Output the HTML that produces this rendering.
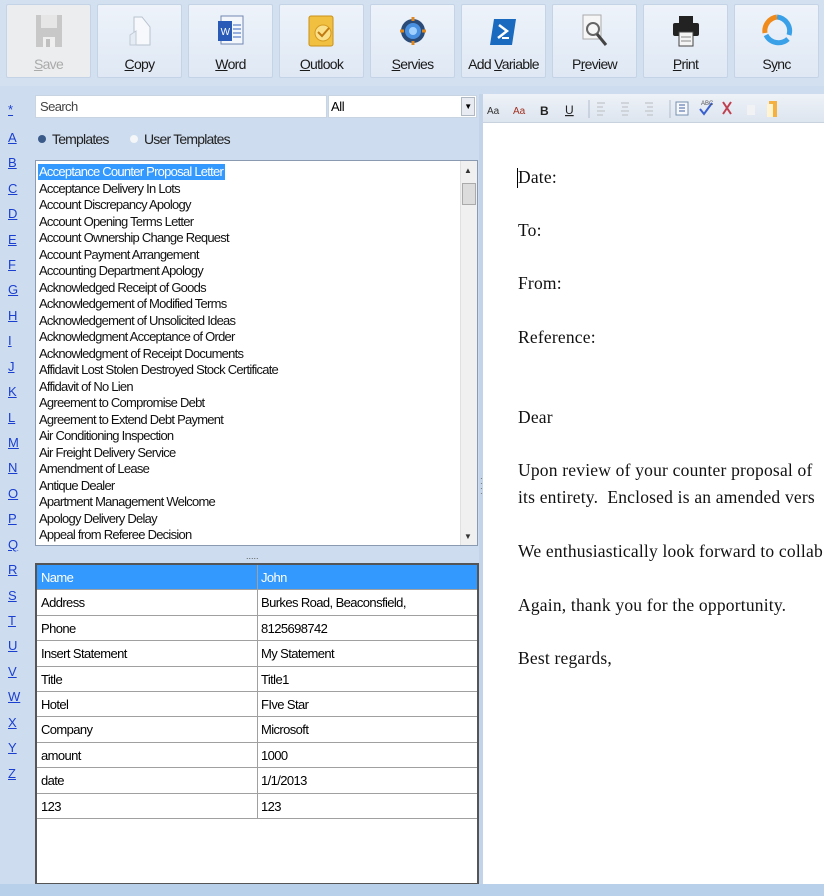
<!DOCTYPE html>
<html><head><meta charset="utf-8">
<style>
*{margin:0;padding:0;box-sizing:border-box}
body{width:824px;height:896px;overflow:hidden;background:#cddcee;font-family:"Liberation Sans",sans-serif;position:relative}
.tb{position:absolute;top:0;left:0;width:824px;height:86px;background:#d3e0f0}
.btn{position:absolute;top:4px;width:85px;height:74px;background:linear-gradient(#eef3fa,#dfe8f4);border:1px solid #c4d3e6;border-radius:2px;text-align:center;font-size:14px;color:#1a1a1a;letter-spacing:-0.7px}
.btn .ic{position:absolute;left:26px;top:8px;width:32px;height:36px}
.btn .lb{position:absolute;left:0;right:0;top:51px}
.letters{position:absolute;left:0;top:100px;width:28px}
.letters span{position:absolute;left:8px;font-size:13px;color:#1a3fd0;text-decoration:underline}
.search{position:absolute;left:35px;top:95px;width:292px;height:23px;background:#fff;border:1px solid #c8d4e2;font-size:13px;padding:3px 4px;color:#444;letter-spacing:-0.6px}
.dd{position:absolute;left:328px;top:95px;width:149px;height:23px;background:#fff;border:1px solid #c8d4e2;font-size:13px;padding:3px 2px;letter-spacing:-0.4px}
.dd b{position:absolute;right:1px;top:1px;width:14px;height:19px;background:#e8ecf2;border:1px solid #b0b8c4;font-size:8px;text-align:center;line-height:18px;font-weight:normal}
.radio{position:absolute;top:131px;font-size:14px;color:#222;letter-spacing:-0.8px}
.list{position:absolute;left:35px;top:160px;width:443px;height:386px;background:#fff;border:1px solid #8a9ab0;overflow:hidden}
.list div{position:absolute;left:3px;height:16px;font-size:13px;line-height:16px;letter-spacing:-0.75px;color:#111;white-space:nowrap}
.list .sel{background:#3399ff;color:#fff;left:2px;padding:0 2px 0 1px}
.sb{position:absolute;right:0;top:0;width:17px;height:384px;background:#f0f0f0;border-left:1px solid #e0e0e0}
.grid{position:absolute;left:35px;top:563px;width:444px;height:322px;background:#fff;border:2px solid #555}
.row{position:absolute;left:0;width:440px;height:25.4px;border-bottom:1px solid #a0a0a0;font-size:13px;letter-spacing:-0.6px;line-height:25px}
.row span{position:absolute;left:4px}
.row span+span{left:224px}
.row:before{content:"";position:absolute;left:220px;top:0;bottom:0;border-left:1px solid #a0a0a0}
.row.h{background:#3399ff;color:#fff}
.right{position:absolute;left:483px;top:94px;width:341px;height:790px;background:#fff;overflow:hidden}
.rtb{position:absolute;left:0;top:0;width:341px;height:29px;background:linear-gradient(#eef2f8,#dde5ef);border-bottom:1px solid #c8d2de}
.doc{position:absolute;left:35px;font-family:"Liberation Serif",serif;font-size:17.5px;letter-spacing:0.2px;color:#111;white-space:nowrap}
.bottom{position:absolute;left:0;top:884px;width:824px;height:12px;background:#b9d0ea}
</style></head><body>
<div class="tb"></div>
<div class="btn" style="left:6px;background:#ecedef;color:#aaa"><svg class="ic" viewBox="0 0 32 36"><rect x="3" y="2" width="26" height="32" fill="#c8c8c8"/><rect x="8" y="2" width="16" height="13" fill="#e6e6e6"/><rect x="10" y="24" width="12" height="10" fill="#efefef"/><rect x="13" y="26" width="4" height="8" fill="#c0c0c0"/></svg><div class="lb"><u>S</u>ave</div></div>
<div class="btn" style="left:97px"><svg class="ic" viewBox="0 0 32 36"><path d="M10 4h8l8 10v18H10z" fill="#f6f8fb" stroke="#b8c2ce"/><path d="M6 22l6-4v14H6z" fill="#e6ecf3" stroke="#c0cad6"/></svg><div class="lb"><u>C</u>opy</div></div>
<div class="btn" style="left:188px"><svg class="ic" viewBox="0 0 32 36"><rect x="6" y="3" width="22" height="28" fill="#f3f6fb" stroke="#7088b0"/><rect x="3" y="8" width="14" height="20" fill="#2a5ab8"/><text x="10" y="22" font-size="10" fill="#fff" text-anchor="middle" font-family="Liberation Sans">W</text><path d="M18 12h8M18 16h8M18 20h8M18 24h8" stroke="#3a66c0"/></svg><div class="lb"><u>W</u>ord</div></div>
<div class="btn" style="left:279px"><svg class="ic" viewBox="0 0 32 36"><rect x="3" y="3" width="24" height="30" rx="2" fill="#f2c040" stroke="#c8901a"/><circle cx="17" cy="20" r="8" fill="#fbe08a" stroke="#d49a20"/><path d="M12 19l4 4 7-8" stroke="#c07a10" fill="none" stroke-width="2"/></svg><div class="lb"><u>O</u>utlook</div></div>
<div class="btn" style="left:370px"><svg class="ic" viewBox="0 0 32 36"><circle cx="16" cy="18" r="12" fill="#2a4a78"/><circle cx="16" cy="18" r="8" fill="#4a90e0"/><circle cx="16" cy="18" r="4" fill="#a0d0ff"/><path d="M16 4v4M16 28v4M3 18h4M25 18h4" stroke="#e08820" stroke-width="3"/></svg><div class="lb"><u>S</u>ervies</div></div>
<div class="btn" style="left:461px"><svg class="ic" viewBox="0 0 32 36"><path d="M6 6h22l-4 26H2z" fill="#1a6ac0"/><path d="M11 12l8 6-9 7" stroke="#fff" stroke-width="2.5" fill="none"/><path d="M14 25h7" stroke="#fff" stroke-width="2"/></svg><div class="lb">Add <u>V</u>ariable</div></div>
<div class="btn" style="left:552px"><svg class="ic" viewBox="0 0 32 36"><rect x="4" y="2" width="18" height="24" fill="#f6f6f6" stroke="#aaa"/><circle cx="14" cy="16" r="6" fill="none" stroke="#666" stroke-width="2"/><path d="M18 21l9 11" stroke="#444" stroke-width="3"/></svg><div class="lb">P<u>r</u>eview</div></div>
<div class="btn" style="left:643px"><svg class="ic" viewBox="0 0 32 36"><rect x="9" y="3" width="14" height="8" fill="#222"/><rect x="3" y="10" width="26" height="13" rx="2" fill="#222"/><rect x="9" y="19" width="14" height="14" fill="#f4f4f4" stroke="#444"/><path d="M11 24h10M11 28h10" stroke="#888"/></svg><div class="lb"><u>P</u>rint</div></div>
<div class="btn" style="left:734px"><svg class="ic" viewBox="0 0 32 36"><path d="M16 4a14 14 0 0 1 12 18" stroke="#3aa0e8" stroke-width="5" fill="none"/><path d="M27 26a14 14 0 0 1-22-4" stroke="#3aa0e8" stroke-width="5" fill="none"/><path d="M4 20A14 14 0 0 1 16 4" stroke="#f08a1a" stroke-width="5" fill="none"/></svg><div class="lb">S<u>y</u>nc</div></div>

<div class="letters">
<span style="top:2px">*</span><span style="top:30px">A</span><span style="top:55px">B</span><span style="top:81px">C</span><span style="top:106px">D</span><span style="top:132px">E</span><span style="top:157px">F</span><span style="top:182px">G</span><span style="top:208px">H</span><span style="top:233px">I</span><span style="top:259px">J</span><span style="top:284px">K</span><span style="top:310px">L</span><span style="top:335px">M</span><span style="top:360px">N</span><span style="top:386px">O</span><span style="top:411px">P</span><span style="top:437px">Q</span><span style="top:462px">R</span><span style="top:488px">S</span><span style="top:513px">T</span><span style="top:538px">U</span><span style="top:564px">V</span><span style="top:589px">W</span><span style="top:615px">X</span><span style="top:640px">Y</span><span style="top:666px">Z</span>
</div>

<div class="search">Search</div>
<div class="dd">All<b>▼</b></div>
<div class="radio" style="left:38px"><span style="display:inline-block;width:8px;height:8px;border-radius:50%;background:#3a5a8a;margin-right:6px;vertical-align:1px"></span>Templates</div>
<div class="radio" style="left:130px"><span style="display:inline-block;width:8px;height:8px;border-radius:50%;background:#f4f6f8;margin-right:6px;vertical-align:1px"></span>User Templates</div>

<div class="list">
<div class="sel" style="top:3px">Acceptance Counter Proposal Letter</div>
<div style="top:19.5px">Acceptance Delivery In Lots</div>
<div style="top:36px">Account Discrepancy Apology</div>
<div style="top:52.5px">Account Opening Terms Letter</div>
<div style="top:69px">Account Ownership Change Request</div>
<div style="top:85.5px">Account Payment Arrangement</div>
<div style="top:102px">Accounting Department Apology</div>
<div style="top:118.5px">Acknowledged Receipt of Goods</div>
<div style="top:135px">Acknowledgement of Modified Terms</div>
<div style="top:151.5px">Acknowledgement of Unsolicited Ideas</div>
<div style="top:168px">Acknowledgment Acceptance of Order</div>
<div style="top:184.5px">Acknowledgment of Receipt Documents</div>
<div style="top:201px">Affidavit Lost Stolen Destroyed Stock Certificate</div>
<div style="top:217.5px">Affidavit of No Lien</div>
<div style="top:234px">Agreement to Compromise Debt</div>
<div style="top:250.5px">Agreement to Extend Debt Payment</div>
<div style="top:267px">Air Conditioning Inspection</div>
<div style="top:283.5px">Air Freight Delivery Service</div>
<div style="top:300px">Amendment of Lease</div>
<div style="top:316.5px">Antique Dealer</div>
<div style="top:333px">Apartment Management Welcome</div>
<div style="top:349.5px">Apology Delivery Delay</div>
<div style="top:366px">Appeal from Referee Decision</div>
<div class="sb" style="left:auto;height:384px;padding:0"><div style="position:absolute;left:1px;top:22px;width:14px;height:22px;background:#dcdcdc;border:1px solid #aaa"></div><div style="position:absolute;left:3px;top:2px;font-size:8px;color:#333">▲</div><div style="position:absolute;left:3px;top:368px;font-size:8px;color:#333">▼</div></div>
</div>
<div style="position:absolute;left:246px;top:551px;font-size:9px;color:#555;letter-spacing:0px">.....</div>

<div class="grid">
<div class="row h" style="top:0"><span>Name</span><span>John</span></div>
<div class="row" style="top:25.4px"><span>Address</span><span>Burkes Road, Beaconsfield,</span></div>
<div class="row" style="top:50.8px"><span>Phone</span><span>8125698742</span></div>
<div class="row" style="top:76.2px"><span>Insert Statement</span><span>My Statement</span></div>
<div class="row" style="top:101.6px"><span>Title</span><span>Title1</span></div>
<div class="row" style="top:127px"><span>Hotel</span><span>FIve Star</span></div>
<div class="row" style="top:152.4px"><span>Company</span><span>Microsoft</span></div>
<div class="row" style="top:177.8px"><span>amount</span><span>1000</span></div>
<div class="row" style="top:203.2px"><span>date</span><span>1/1/2013</span></div>
<div class="row" style="top:228.6px"><span>123</span><span>123</span></div>
</div>

<div style="position:absolute;left:479px;top:94px;width:4px;height:790px;background:#c4d4e8"></div>
<div style="position:absolute;left:480px;top:476px;font-size:8px;line-height:5px;color:#555">·<br>·<br>·<br>·</div>

<div class="right">
<div class="rtb">
<svg width="341" height="29" viewBox="0 0 341 29">
<text x="4" y="20" font-size="10" font-family="Liberation Sans" fill="#333">Aa</text>
<text x="30" y="20" font-size="10" font-family="Liberation Sans" fill="#a03020">Aa</text>
<text x="57" y="21" font-size="12" font-weight="bold" font-family="Liberation Sans" fill="#222">B</text>
<text x="82" y="20" font-size="12" font-family="Liberation Sans" fill="#222" text-decoration="underline">U</text>
<line x1="106" y1="6" x2="106" y2="24" stroke="#b0bccb"/>
<g stroke="#c8ccd2" stroke-width="1.5"><path d="M114 9h8M114 13h6M114 17h8M114 21h6"/><path d="M138 9h8M139 13h6M138 17h8M139 21h6"/><path d="M162 9h8M164 13h6M162 17h8M164 21h6"/></g>
<line x1="187" y1="6" x2="187" y2="24" stroke="#b0bccb"/>
<rect x="193" y="8" width="12" height="13" fill="#f6f8fb" stroke="#7890b0"/><path d="M196 11h6M196 14h6M196 17h6" stroke="#4060a0"/>
<path d="M217 15l4 5 8-11" stroke="#3a60d0" stroke-width="2" fill="none"/><text x="218" y="11" font-size="6" fill="#555" font-family="Liberation Sans">ABC</text>
<path d="M240 8l8 12M248 8l-8 12" stroke="#c04050" stroke-width="2"/>
<rect x="264" y="11" width="8" height="10" fill="#f0f2f4"/>
<rect x="286" y="7" width="8" height="16" fill="#f4b040"/><rect x="284" y="10" width="6" height="13" fill="#fff3d0"/>
</svg>
</div>
<div style="position:absolute;left:34px;top:74px;width:1px;height:20px;background:#000"></div>
<div class="doc" style="top:73px">Date:</div>
<div class="doc" style="top:126px">To:</div>
<div class="doc" style="top:179px">From:</div>
<div class="doc" style="top:233px">Reference:</div>
<div class="doc" style="top:313px">Dear</div>
<div class="doc" style="top:366px">Upon review of your counter proposal of</div>
<div class="doc" style="top:393px">its entirety.&nbsp; Enclosed is an amended vers</div>
<div class="doc" style="top:447px">We enthusiastically look forward to collab</div>
<div class="doc" style="top:501px">Again, thank you for the opportunity.</div>
<div class="doc" style="top:554px">Best regards,</div>
</div>
<div class="bottom"></div>
</body></html>
